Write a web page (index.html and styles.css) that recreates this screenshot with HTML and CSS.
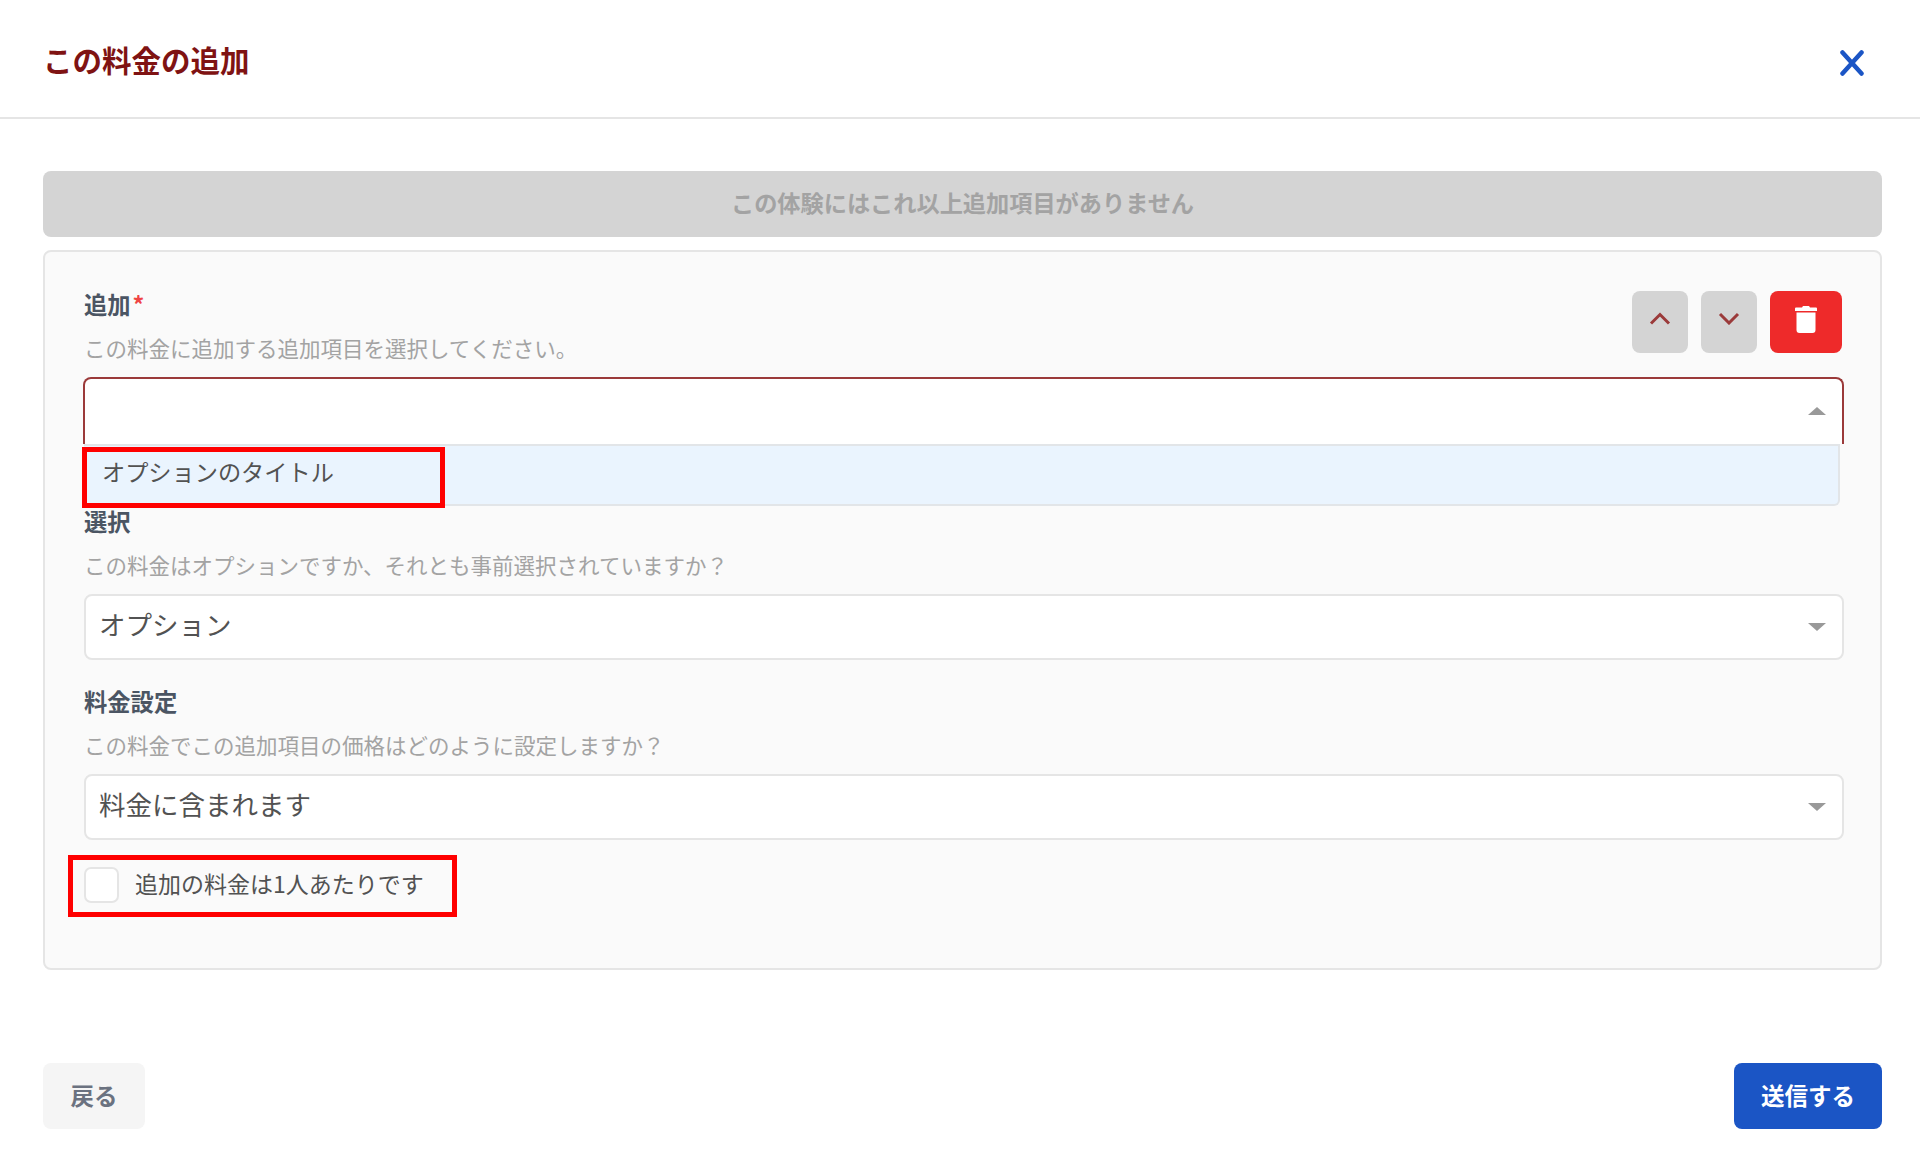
FILE: index.html
```html
<!DOCTYPE html>
<html lang="ja">
<head>
<meta charset="utf-8">
<title>この料金の追加</title>
<link rel="stylesheet" href="styles.css">
</head>
<body>
<div class="page">
  <header class="header">
    <h1 class="title">この料金の追加</h1>
    <button class="close" aria-label="閉じる">
      <svg width="24" height="26" viewBox="0 0 24 26"><path d="M2.500 2.500 21.500 23.500M21.500 2.500 2.500 23.500" fill="none" stroke="#1b55c5" stroke-width="4.500" stroke-linecap="round"/></svg>
    </button>
  </header>
  <main class="main">
    <div class="banner"><span class="banner-text">この体験にはこれ以上追加項目がありません</span></div>
    <section class="panel">
      <div class="field field-first">
        <div class="field-head">
          <div>
            <div class="label">追加<span class="req">*</span></div>
            <div class="help">この料金に追加する追加項目を選択してください。</div>
          </div>
          <div class="actions">
            <button class="act act-move" aria-label="上へ">
              <svg width="22" height="13" viewBox="0 0 22 13"><path d="M2 11.500 11 2.500l9 9" fill="none" stroke="#9b3a3a" stroke-width="3"/></svg>
            </button>
            <button class="act act-move" aria-label="下へ">
              <svg width="22" height="13" viewBox="0 0 22 13"><path d="M2 2 11 11l9-9" fill="none" stroke="#9b3a3a" stroke-width="3"/></svg>
            </button>
            <button class="act act-del" aria-label="削除">
              <svg width="22" height="27" viewBox="0 0 22 27"><path d="M8 0h6l1 1.500h6a1 1 0 0 1 1 1V5H0V2.500a1 1 0 0 1 1-1h6zM1.500 6.500h19V24a3 3 0 0 1-3 3h-13a3 3 0 0 1-3-3z" fill="#fff"/></svg>
            </button>
          </div>
        </div>
        <div class="select-wrap">
          <div class="select select-open"><span class="caret caret-up"></span></div>
          <div class="menu">
            <div class="option">オプションのタイトル</div>
            <div class="mark mark-option"></div>
          </div>
        </div>
      </div>
      <div class="field">
        <div class="label">選択</div>
        <div class="help">この料金はオプションですか、それとも事前選択されていますか？</div>
        <div class="select"><span class="select-text">オプション</span><span class="caret"></span></div>
      </div>
      <div class="field">
        <div class="label">料金設定</div>
        <div class="help">この料金でこの追加項目の価格はどのように設定しますか？</div>
        <div class="select"><span class="select-text">料金に含まれます</span><span class="caret"></span></div>
      </div>
      <div class="check-row">
        <span class="checkbox"></span>
        <span class="check-label">追加の料金は1人あたりです</span>
        <div class="mark mark-check"></div>
      </div>
    </section>
  </main>
  <footer class="footer">
    <button class="btn btn-back">戻る</button>
    <button class="btn btn-send">送信する</button>
  </footer>
</div>
</body>
</html>
```
FILE: styles.css
```css
* { box-sizing: border-box; }
html, body { margin: 0; height: 100%; }
body {
  background: #fff;
  font-family: "Noto Sans CJK JP", "Noto Sans", sans-serif;
  color: #525252;
}
button { font-family: inherit; border: 0; padding: 0; cursor: pointer; }
.page { height: 1160px; display: flex; flex-direction: column; overflow: hidden; }
.header {
  height: 119px;
  flex: none;
  display: flex;
  align-items: center;
  justify-content: space-between;
  padding: 0 56px 0 43px;
  border-bottom: 2px solid #e5e5e5;
}
.title { margin: 1px 0 0; font-size: 29.500px; line-height: 40px; font-weight: 700; color: #7f1313; }
.close { background: none; display: flex; margin-top: 9px; }
.main { padding: 52px 38px 0 43px; flex: none; }
.banner {
  height: 66px;
  display: flex;
  align-items: center;
  justify-content: center;
  background: #d4d4d4;
  border-radius: 8px;
  font-size: 23.200px;
  font-weight: 700;
  color: #a3a3a3;
}
.banner-text { padding-bottom: 5px; }
.panel {
  margin-top: 13px;
  padding: 38px 36px 65px 39px;
  background: #fafafa;
  border: 2px solid #e5e5e5;
  border-radius: 8px;
}
.field { margin-bottom: 27px; }
.field-first { margin-bottom: 63px; }
.field-head { display: flex; justify-content: space-between; align-items: flex-start; }
.label { font-size: 23.300px; line-height: 28px; font-weight: 700; color: #4b5563; margin-bottom: 15px; }
.req { color: #ef4444; margin-left: 2px; }
.help { font-size: 21.500px; line-height: 30px; color: #a3a3a3; margin-bottom: 14px; }
.actions { display: flex; gap: 13px; margin-top: 1px; margin-right: 2px; }
.act { height: 62px; border-radius: 8px; display: flex; justify-content: center; }
.act-move { width: 56px; background: #d4d4d4; padding-top: 21px; }
.act-del { width: 72px; background: #ee2a2a; padding-top: 15px; }
.select-wrap { position: relative; }
.select {
  height: 66px;
  display: flex;
  align-items: center;
  justify-content: space-between;
  padding: 0 16px 0 13px;
  background: #fff;
  border: 2px solid #e5e5e5;
  border-radius: 8px;
  font-size: 26.500px;
  color: #525252;
}
.select-text { padding-bottom: 8px; }
.select-open {
  height: 67px;
  margin-left: -1px;
  justify-content: flex-end;
  border-color: #9b3a3a;
  border-bottom: 0;
  border-radius: 8px 8px 0 0;
}
.caret {
  width: 0;
  height: 0;
  border-left: 9px solid transparent;
  border-right: 9px solid transparent;
  border-top: 8px solid #999;
}
.caret-up { border-top: 0; border-bottom: 8px solid #999; margin-bottom: 2px; }
.menu {
  position: absolute;
  top: 67px;
  left: 0;
  right: 4px;
  height: 62px;
  background: #eaf4fe;
  border: 2px solid #e2e5e8;
  border-left: 0;
  border-radius: 0 0 6px 6px;
  z-index: 2;
}
.option { padding: 5px 0 0 18px; font-size: 23.200px; line-height: 40px; color: #525252; }
.mark { position: absolute; border: 5px solid #f00; pointer-events: none; }
.mark-option { left: -2px; top: 1px; width: 363px; height: 61px; }
.check-row { position: relative; display: flex; align-items: center; height: 36px; }
.checkbox { width: 35px; height: 36px; background: #fff; border: 2px solid #e5e5e5; border-radius: 7px; }
.check-label { margin-left: 16px; padding-bottom: 4px; font-size: 23px; color: #525252; }
.mark-check { left: -16px; top: -12px; width: 389px; height: 62px; }
.footer {
  margin-top: 93px;
  padding: 0 38px 0 43px;
  display: flex;
  justify-content: space-between;
}
.btn { height: 66px; border-radius: 8px; font-size: 23.500px; font-weight: 700; padding-bottom: 2px; }
.btn-back { width: 102px; background: #f5f5f5; color: #6b7280; }
.btn-send { width: 148px; background: #1b55c5; color: #fff; }
```
